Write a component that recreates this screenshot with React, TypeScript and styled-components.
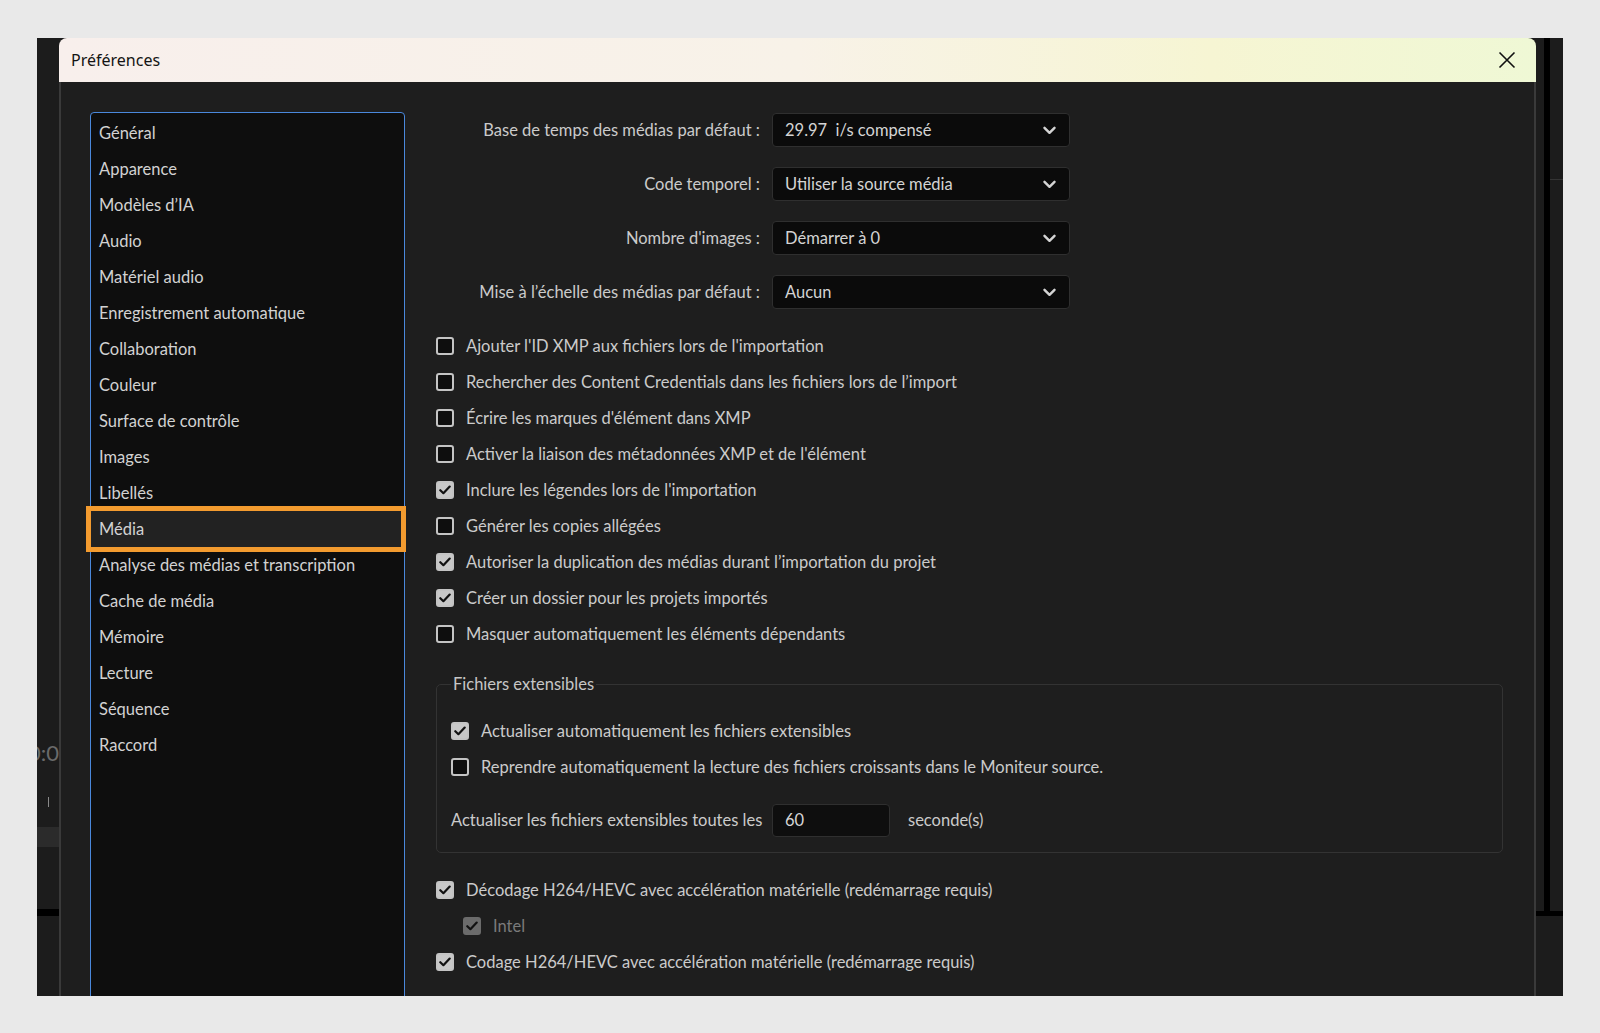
import React from "react";
import styled, { createGlobalStyle, css } from "styled-components";

const GlobalStyle = createGlobalStyle`
  html, body {
    margin: 0;
    padding: 0;
    background: #e9e9e9;
  }
  body {
    font-family: Lato, "Noto Sans", "Liberation Sans", sans-serif;
  }
`;

const Screen = styled.div`
  display: flex;
  width: 1526px;
  height: 958px;
  margin: 38px 0 0 37px;
  background: #1c1c1c;
  overflow: hidden;
`;

/* app content peeking out from behind the dialog */
const LeftStrip = styled.div`
  width: 22px;
  flex-shrink: 0;
  display: flex;
  flex-direction: column;
  overflow: hidden;
`;

const TimeReadout = styled.div`
  margin-top: 703px;
  height: 24px;
  display: flex;
  justify-content: flex-end;
  white-space: nowrap;
  font-size: 22px;
  line-height: 24px;
  color: #6a6a6a;
`;

const Tick = styled.div`
  margin: 32px 0 0 11px;
  width: 1px;
  height: 10px;
  background: #8a8a8a;
`;

const Band = styled.div<{ $color: string; $h: number; $top: number }>`
  margin-top: ${(p) => p.$top}px;
  height: ${(p) => p.$h}px;
  background: ${(p) => p.$color};
`;

const RightStrip = styled.div`
  flex: 1;
  display: flex;
  flex-direction: column;
`;

const RightUpper = styled.div`
  height: 873px;
  display: flex;
`;

const RightGap = styled.div`
  width: 8px;
`;

const RightBar = styled.div`
  width: 6px;
  background: #000;
`;

const RightRest = styled.div`
  flex: 1;
  margin-top: 141px;
  border-top: 1px solid #343434;
`;

const Dialog = styled.div`
  width: 1477px;
  flex-shrink: 0;
  display: flex;
  flex-direction: column;
`;

const TitleBar = styled.div`
  height: 44px;
  flex-shrink: 0;
  display: flex;
  align-items: center;
  justify-content: space-between;
  padding: 0 20px 0 12px;
  border-radius: 8px 8px 0 0;
  background: linear-gradient(
    90deg,
    #f8efec 0%,
    #f8f2e8 50%,
    #f6f5d3 78%,
    #eff8d5 100%
  );
`;

const Title = styled.span`
  font-family: "Noto Sans", "Open Sans", sans-serif;
  font-size: 16px;
  color: #141414;
`;

const CloseButton = styled.button`
  width: 18px;
  height: 18px;
  padding: 0;
  border: none;
  background: none;
  display: flex;
  align-items: center;
  justify-content: center;
`;

const Body = styled.div`
  flex: 1;
  display: flex;
  gap: 31px;
  padding: 30px 31px 0 29px;
  background: #1e1e1e;
  border-left: 2px solid #3a3a3a;
  border-right: 2px solid #3a3a3a;
  overflow: hidden;
`;

const Nav = styled.div`
  width: 315px;
  height: 920px;
  flex-shrink: 0;
  box-sizing: border-box;
  padding-top: 2px;
  background: #0e0e0e;
  border: 1px solid #4a88dc;
  border-radius: 4px;
`;

const NavItem = styled.div<{ $active?: boolean }>`
  height: 36px;
  display: flex;
  align-items: center;
  padding-left: 8px;
  font-size: 16.5px;
  color: #d2d2d2;
  ${(p) =>
    p.$active &&
    css`
      position: relative;
      margin-right: 3px;
      background: #222222;
      outline: 5px solid #f39b2f;
    `}
`;

const Content = styled.div`
  flex: 1;
  display: flex;
  flex-direction: column;
  padding-top: 1px;
  font-size: 16.5px;
  color: #cbcbcb;
`;

const SettingsGrid = styled.div`
  display: grid;
  grid-template-columns: 324px 298px;
  column-gap: 12px;
  row-gap: 20px;
  align-items: center;
`;

const FieldLabel = styled.div`
  text-align: right;
  white-space: nowrap;
`;

const Select = styled.div`
  height: 34px;
  box-sizing: border-box;
  display: flex;
  align-items: center;
  justify-content: space-between;
  padding: 0 13px 0 12px;
  background: #0b0b0b;
  border: 1px solid #2f2f2f;
  border-radius: 4px;
  color: #d4d4d4;
`;

const SelectValue = styled.span`
  white-space: pre;
`;

const CheckList = styled.div<{ $top: number }>`
  margin-top: ${(p) => p.$top}px;
  display: flex;
  flex-direction: column;
`;

const CheckRow = styled.div<{ $indent?: number; $disabled?: boolean }>`
  height: 36px;
  display: flex;
  align-items: center;
  gap: 12px;
  padding-left: ${(p) => p.$indent ?? 0}px;
  white-space: nowrap;
  color: ${(p) => (p.$disabled ? "#7a7a7a" : "#cbcbcb")};
`;

const Box = styled.span<{ $checked?: boolean; $disabled?: boolean }>`
  width: 18px;
  height: 18px;
  flex-shrink: 0;
  box-sizing: border-box;
  display: flex;
  align-items: center;
  justify-content: center;
  border-radius: 3px;
  border: 2px solid ${(p) => (p.$disabled ? "#6b6b6b" : "#c4c4c4")};
  background: ${(p) =>
    p.$disabled ? "#6b6b6b" : p.$checked ? "#c8c8c8" : "#0e0e0e"};
`;

const Fieldset = styled.fieldset`
  margin: 22px 0 0 0;
  padding: 19px 14px 15px 14px;
  min-width: 0;
  border: 1px solid #333333;
  border-radius: 5px;
`;

const Legend = styled.legend`
  padding: 0 2px;
  font-size: 16.5px;
  line-height: 20px;
  color: #c6c6c6;
`;

const RefreshRow = styled.div`
  margin-top: 18px;
  height: 34px;
  display: flex;
  align-items: center;
`;

const RefreshLabel = styled.span`
  width: 321px;
  flex-shrink: 0;
  white-space: nowrap;
`;

const NumberInput = styled.div`
  width: 118px;
  height: 33px;
  box-sizing: border-box;
  display: flex;
  align-items: center;
  padding-left: 12px;
  background: #0e0e0e;
  border: 1px solid #2f2f2f;
  border-radius: 4px;
  color: #d6d6d6;
`;

const Unit = styled.span`
  margin-left: 18px;
`;

const Chevron = () => (
  <svg width="13" height="9" viewBox="0 0 13 9">
    <path
      d="M1.5 1.8 L6.5 6.8 L11.5 1.8"
      fill="none"
      stroke="#d4d4d4"
      strokeWidth="2.4"
      strokeLinecap="round"
      strokeLinejoin="round"
    />
  </svg>
);

const CloseIcon = () => (
  <svg width="18" height="18" viewBox="0 0 18 18">
    <path d="M1.5 1.5 L16.5 16.5 M16.5 1.5 L1.5 16.5" stroke="#111" strokeWidth="1.6" />
  </svg>
);

const CheckMark = () => (
  <svg width="12" height="10" viewBox="0 0 12 10">
    <path
      d="M1.3 5.2 L4.4 8.2 L10.7 1.6"
      fill="none"
      stroke="#111"
      strokeWidth="2.2"
      strokeLinecap="round"
      strokeLinejoin="round"
    />
  </svg>
);

type CheckProps = {
  label: string;
  checked?: boolean;
  disabled?: boolean;
  indent?: number;
};

const Check: React.FC<CheckProps> = ({ label, checked, disabled, indent }) => (
  <CheckRow $indent={indent} $disabled={disabled}>
    <Box $checked={checked} $disabled={disabled}>
      {checked && <CheckMark />}
    </Box>
    {label}
  </CheckRow>
);

const navItems = [
  "Général",
  "Apparence",
  "Modèles d’IA",
  "Audio",
  "Matériel audio",
  "Enregistrement automatique",
  "Collaboration",
  "Couleur",
  "Surface de contrôle",
  "Images",
  "Libellés",
  "Média",
  "Analyse des médias et transcription",
  "Cache de média",
  "Mémoire",
  "Lecture",
  "Séquence",
  "Raccord",
];

const selects = [
  ["Base de temps des médias par défaut :", "29.97  i/s compensé"],
  ["Code temporel :", "Utiliser la source média"],
  ["Nombre d'images :", "Démarrer à 0"],
  ["Mise à l’échelle des médias par défaut :", "Aucun"],
];

const options: [string, boolean][] = [
  ["Ajouter l'ID XMP aux fichiers lors de l'importation", false],
  ["Rechercher des Content Credentials dans les fichiers lors de l’import", false],
  ["Écrire les marques d'élément dans XMP", false],
  ["Activer la liaison des métadonnées XMP et de l'élément", false],
  ["Inclure les légendes lors de l'importation", true],
  ["Générer les copies allégées", false],
  ["Autoriser la duplication des médias durant l’importation du projet", true],
  ["Créer un dossier pour les projets importés", true],
  ["Masquer automatiquement les éléments dépendants", false],
];

export default function App() {
  return (
    <>
      <GlobalStyle />
      <Screen>
        <LeftStrip>
          <TimeReadout>00:00:0</TimeReadout>
          <Tick />
          <Band $color="#2b2b2b" $h={20} $top={20} />
          <Band $color="#000" $h={7} $top={62} />
        </LeftStrip>

        <Dialog>
          <TitleBar>
            <Title>Préférences</Title>
            <CloseButton aria-label="Fermer">
              <CloseIcon />
            </CloseButton>
          </TitleBar>

          <Body>
            <Nav>
              {navItems.map((item) => (
                <NavItem key={item} $active={item === "Média"}>
                  {item}
                </NavItem>
              ))}
            </Nav>

            <Content>
              <SettingsGrid>
                {selects.map(([label, value]) => (
                  <React.Fragment key={label}>
                    <FieldLabel>{label}</FieldLabel>
                    <Select>
                      <SelectValue>{value}</SelectValue>
                      <Chevron />
                    </Select>
                  </React.Fragment>
                ))}
              </SettingsGrid>

              <CheckList $top={19}>
                {options.map(([label, checked]) => (
                  <Check key={label} label={label} checked={checked} />
                ))}
              </CheckList>

              <Fieldset>
                <Legend>Fichiers extensibles</Legend>
                <Check label="Actualiser automatiquement les fichiers extensibles" checked />
                <Check label="Reprendre automatiquement la lecture des fichiers croissants dans le Moniteur source." />
                <RefreshRow>
                  <RefreshLabel>Actualiser les fichiers extensibles toutes les</RefreshLabel>
                  <NumberInput>60</NumberInput>
                  <Unit>seconde(s)</Unit>
                </RefreshRow>
              </Fieldset>

              <CheckList $top={19}>
                <Check label="Décodage H264/HEVC avec accélération matérielle (redémarrage requis)" checked />
                <Check label="Intel" checked disabled indent={27} />
                <Check label="Codage H264/HEVC avec accélération matérielle (redémarrage requis)" checked />
              </CheckList>
            </Content>
          </Body>
        </Dialog>

        <RightStrip>
          <RightUpper>
            <RightGap />
            <RightBar />
            <RightRest />
          </RightUpper>
          <Band $color="#000" $h={5} $top={0} />
        </RightStrip>
      </Screen>
    </>
  );
}
